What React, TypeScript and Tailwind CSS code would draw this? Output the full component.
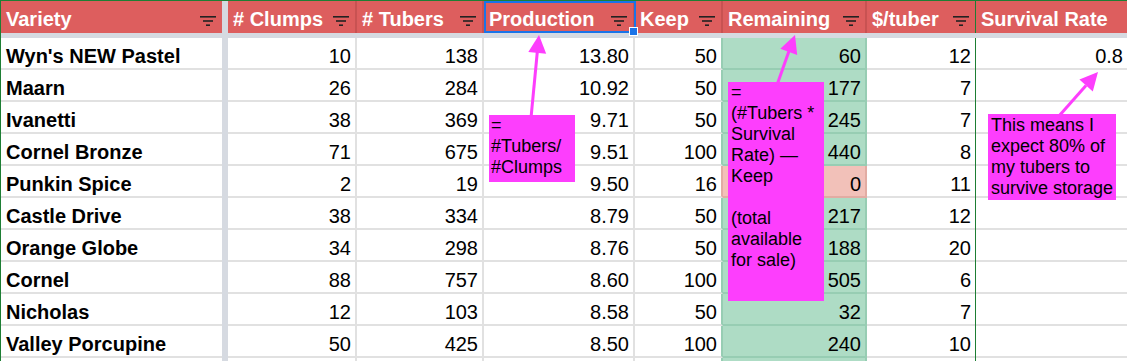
import React from "react";

type Row = {
  variety: string;
  clumps: string;
  tubers: string;
  production: string;
  keep: string;
  remaining: string;
  price: string;
  survival: string;
  low?: boolean;
};

const rows: Row[] = [
  { variety: "Wyn's NEW Pastel", clumps: "10", tubers: "138", production: "13.80", keep: "50", remaining: "60", price: "12", survival: "0.8" },
  { variety: "Maarn", clumps: "26", tubers: "284", production: "10.92", keep: "50", remaining: "177", price: "7", survival: "" },
  { variety: "Ivanetti", clumps: "38", tubers: "369", production: "9.71", keep: "50", remaining: "245", price: "7", survival: "" },
  { variety: "Cornel Bronze", clumps: "71", tubers: "675", production: "9.51", keep: "100", remaining: "440", price: "8", survival: "" },
  { variety: "Punkin Spice", clumps: "2", tubers: "19", production: "9.50", keep: "16", remaining: "0", price: "11", survival: "", low: true },
  { variety: "Castle Drive", clumps: "38", tubers: "334", production: "8.79", keep: "50", remaining: "217", price: "12", survival: "" },
  { variety: "Orange Globe", clumps: "34", tubers: "298", production: "8.76", keep: "50", remaining: "188", price: "20", survival: "" },
  { variety: "Cornel", clumps: "88", tubers: "757", production: "8.60", keep: "100", remaining: "505", price: "6", survival: "" },
  { variety: "Nicholas", clumps: "12", tubers: "103", production: "8.58", keep: "50", remaining: "32", price: "7", survival: "" },
  { variety: "Valley Porcupine", clumps: "50", tubers: "425", production: "8.50", keep: "100", remaining: "240", price: "10", survival: "" },
  { variety: "", clumps: "", tubers: "", production: "", keep: "", remaining: "", price: "", survival: "" },
];

function FilterIcon() {
  return (
    <svg width="16" height="10" viewBox="0 0 16 10" className="shrink-0">
      <rect x="0" y="0" width="16" height="1.6" fill="#222" />
      <rect x="3" y="4.2" width="10" height="1.6" fill="#222" />
      <rect x="6" y="8.4" width="4" height="1.6" fill="#222" />
    </svg>
  );
}

function HeaderCell({
  label,
  width,
  filter = true,
  divider = "border-r-2 border-[#c85252]",
}: {
  label: string;
  width: string;
  filter?: boolean;
  divider?: string;
}) {
  return (
    <div
      className={`${width} ${divider} h-full flex items-end justify-between pl-[5px] pr-[6px] pb-[4px] text-white font-bold text-[20px] leading-[20px] whitespace-nowrap`}
    >
      <span>{label}</span>
      {filter && (
        <span className="pb-[3px]">
          <FilterIcon />
        </span>
      )}
    </div>
  );
}

function Cell({ value, width, extra = "border-r-2 border-[#e1e1e1] bg-white" }: { value: string; width: string; extra?: string }) {
  return (
    <div
      className={`${width} ${extra} h-full border-b-2 flex items-end justify-end pr-[4px] pb-[2px] text-[20px] leading-[20px] text-black`}
    >
      {value}
    </div>
  );
}

export default function App() {
  return (
    <div className="relative w-[1127px] h-[361px] overflow-hidden bg-white border-t border-l border-[#1e7e34] font-['Liberation_Sans',Arial,sans-serif]">
      {/* Header */}
      <div className="flex h-[32px] bg-[#dd5e5e]">
        <HeaderCell label="Variety" width="w-[221px]" divider="" />
        <div className="w-[6px] h-full bg-[#d6dae1]" />
        <HeaderCell label="# Clumps" width="w-[129px]" />
        <HeaderCell label="# Tubers" width="w-[127px]" />
        <HeaderCell label="Production" width="w-[151px]" />
        <HeaderCell label="Keep" width="w-[88px]" />
        <HeaderCell label="Remaining" width="w-[144px]" />
        <HeaderCell label="$/tuber" width="w-[109px]" divider="border-r border-[#1e7e34]" />
        <HeaderCell label="Survival Rate" width="flex-1" filter={false} divider="" />
      </div>
      <div className="h-[5px] bg-[#d6dae1]" />

      {/* Body */}
      {rows.map((r, i) => {
        const green = r.low ? "bg-[#f2c1b9] border-[#e2aca3]" : "bg-[#aedcc5] border-[#97cdb3]";
        const keepBorder = r.low
          ? "border-r-2 border-r-[#e2aca3] border-b-[#e1e1e1] bg-white"
          : "border-r-2 border-r-[#97cdb3] border-b-[#e1e1e1] bg-white";
        return (
          <div key={i} className="flex h-[32px]">
            <div className="w-[221px] h-full border-b-2 border-[#e1e1e1] flex items-end pl-[5px] pb-[2px] font-bold text-[20px] leading-[20px] text-black whitespace-nowrap">
              {r.variety}
            </div>
            <div className="w-[6px] h-full bg-[#d6dae1]" />
            <Cell value={r.clumps} width="w-[129px]" />
            <Cell value={r.tubers} width="w-[127px]" />
            <Cell value={r.production} width="w-[151px]" />
            <Cell value={r.keep} width="w-[88px]" extra={keepBorder} />
            <Cell value={r.remaining} width="w-[144px]" extra={`border-r-2 ${green}`} />
            <div className="w-[109px] h-full flex">
              <div className="flex-1 h-full border-b-2 border-[#e1e1e1] flex items-end justify-end pr-[4px] pb-[2px] text-[20px] leading-[20px] text-black">
                {r.price}
              </div>
              <div className="w-px h-full bg-[#1e7e34]" />
            </div>
            <Cell value={r.survival} width="flex-1" extra="border-[#e1e1e1] bg-white" />
          </div>
        );
      })}

      {/* Selected header cell */}
      <div className="absolute left-[483px] top-0 w-[152px] h-[32px] border-2 border-[#1a73e8]" />
      <div className="absolute left-[628px] top-[26px] w-[9px] h-[9px] bg-[#1a73e8] border border-white" />

      {/* Annotations */}
      <div className="absolute left-[488px] top-[114px] w-[86px] h-[67px] bg-[#fd3efd] pl-[2px] text-[18px] leading-[21px] text-black">
        <div>=</div>
        <div>#Tubers/</div>
        <div>#Clumps</div>
      </div>
      <div className="absolute left-[727px] top-[81px] w-[96px] h-[219px] bg-[#fd3efd] pl-[3px] text-[18px] leading-[21px] text-black whitespace-nowrap">
        <div>=</div>
        <div>(#Tubers *</div>
        <div>Survival</div>
        <div>Rate) —</div>
        <div>Keep</div>
        <div>&nbsp;</div>
        <div>(total</div>
        <div>available</div>
        <div>for sale)</div>
      </div>
      <div className="absolute left-[987px] top-[113px] w-[128px] h-[86px] bg-[#fd3efd] pl-[3px] pt-[1px] text-[18px] leading-[21px] text-black whitespace-nowrap">
        <div>This means I</div>
        <div>expect 80% of</div>
        <div>my tubers to</div>
        <div>survive storage</div>
      </div>

      {/* Arrows */}
      <svg className="absolute left-0 top-0 pointer-events-none" width="1127" height="361" viewBox="-1 -1 1127 361">
        <line x1="529" y1="116" x2="535.3" y2="50" stroke="#fd3efd" strokeWidth="3" />
        <polygon points="537,33 544.2,51.8 526.3,50" fill="#fd3efd" />
        <line x1="775" y1="83" x2="787" y2="49" stroke="#fd3efd" strokeWidth="3" />
        <polygon points="793,33 795.2,53 778.3,46.8" fill="#fd3efd" />
        <line x1="1057" y1="114" x2="1084" y2="83.5" stroke="#fd3efd" strokeWidth="3" />
        <polygon points="1096,70 1090.8,89.5 1077.4,77.5" fill="#fd3efd" />
      </svg>
    </div>
  );
}
